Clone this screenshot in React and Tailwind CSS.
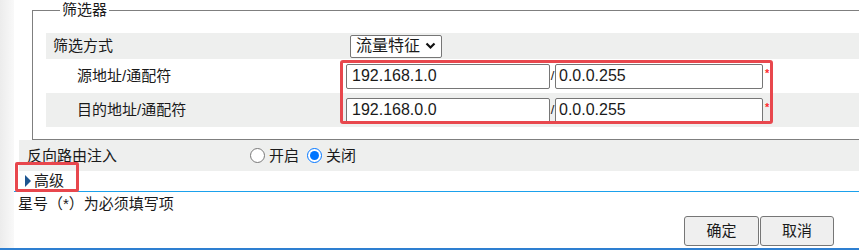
export default function App() {
  return (
    <div className="w-[859px] overflow-hidden bg-white font-['Liberation_Sans','Noto_Sans_CJK_SC',sans-serif] text-[15px] leading-[20px] text-[#1a1a1a]">
      <div className="flex">
        {/* left shade strip */}
        <div className="w-[14px] shrink-0 bg-gradient-to-r from-[#ececec] to-[#f9f9f9]" />

        <div className="flex min-w-0 flex-1 flex-col">
          {/* filter fieldset */}
          <fieldset className="ml-[18px] border-y border-l border-[#7f7f7f] pb-[12px] pl-[13px]">
            <legend className="ml-[14px] px-[2px] leading-[20px]">筛选器</legend>
            <div className="relative mt-[13px]">
              <div className="flex h-[26px] items-center bg-[#eeefee]">
                <div className="w-[300px] pl-[7px]">筛选方式</div>
                <div className="ml-[4px] flex h-[23px] items-center gap-[5px] rounded-[2px] border border-[#767676] bg-white px-[5px] text-[16px]">
                  <span>流量特征</span>
                  <svg width="11" height="8" viewBox="0 0 11 8" fill="none" stroke="#111" strokeWidth="2.2">
                    <path d="M1.5 1.5l4 4 4-4" />
                  </svg>
                </div>
              </div>

              <div className="flex h-[34px] items-center bg-white">
                <div className="w-[300px] pl-[31px]">源地址/通配符</div>
                <input
                  readOnly
                  value="192.168.1.0"
                  className="h-[25px] w-[204px] rounded-[2px] border border-[#767676] px-[5px] font-['Liberation_Sans',sans-serif] text-[16px] outline-none"
                />
                <span className="w-[5px] text-center text-[13px]">/</span>
                <input
                  readOnly
                  value="0.0.0.255"
                  className="h-[25px] w-[208px] rounded-[2px] border border-[#767676] px-[3px] font-['Liberation_Sans',sans-serif] text-[16px] outline-none"
                />
                <span className="ml-[2px] self-start pt-[9px] font-['Liberation_Sans',sans-serif] text-[11px] font-bold leading-[11px] text-[#ff2a2a]">*</span>
              </div>

              <div className="flex h-[34px] items-center bg-[#eeefee]">
                <div className="w-[300px] pl-[31px]">目的地址/通配符</div>
                <input
                  readOnly
                  value="192.168.0.0"
                  className="h-[25px] w-[204px] rounded-[2px] border border-[#767676] bg-white px-[5px] font-['Liberation_Sans',sans-serif] text-[16px] outline-none"
                />
                <span className="w-[5px] text-center text-[13px]">/</span>
                <input
                  readOnly
                  value="0.0.0.255"
                  className="h-[25px] w-[208px] rounded-[2px] border border-[#767676] bg-white px-[3px] font-['Liberation_Sans',sans-serif] text-[16px] outline-none"
                />
                <span className="ml-[2px] self-start pt-[9px] font-['Liberation_Sans',sans-serif] text-[11px] font-bold leading-[11px] text-[#ff2a2a]">*</span>
              </div>

              {/* highlight box */}
              <div className="pointer-events-none absolute left-[294px] top-[27px] h-[64px] w-[433px] rounded-[3px] border-[3px] border-[#e8474d]" />
            </div>
          </fieldset>

          {/* reverse route injection */}
          <div className="ml-[5px] flex h-[31px] items-center bg-[#eeefee]">
            <div className="w-[231px] pl-[8px]">反向路由注入</div>
            <label className="flex items-center gap-[4px]">
              <input type="radio" name="rri" className="m-0 h-[15px] w-[15px]" />
              <span>开启</span>
            </label>
            <label className="ml-[8px] flex items-center gap-[4px]">
              <input type="radio" name="rri" defaultChecked className="m-0 h-[15px] w-[15px]" />
              <span>关闭</span>
            </label>
          </div>

          {/* advanced */}
          <div className="relative flex h-[20px] items-center pl-[11px]">
            <svg width="6" height="12" viewBox="0 0 6 12" className="mr-[3px]">
              <path d="M0 0L6 6L0 12Z" fill="#1d5590" />
            </svg>
            <span>高级</span>
            <div className="pointer-events-none absolute left-[1px] top-[-9px] h-[30px] w-[64px] rounded-[2px] border-[3px] border-[#e8474d]" />
          </div>
          <div className="h-px bg-[#1ba1ec]" />

          <div className="h-[22px] pl-[4px] pt-[2px]">星号（*）为必须填写项</div>

          <div className="flex h-[34px] justify-end pr-[25px] pt-[2px]">
            <button className="h-[30px] w-[75px] rounded-[3px] border border-[#767676] bg-[#efefef] text-[15px]">确定</button>
            <button className="ml-px h-[30px] w-[74px] rounded-[3px] border border-[#767676] bg-[#efefef] text-[15px]">取消</button>
          </div>
        </div>
      </div>

      {/* bottom rule */}
      <div className="h-[2px] bg-[#2e7fd1]" />
    </div>
  )
}
